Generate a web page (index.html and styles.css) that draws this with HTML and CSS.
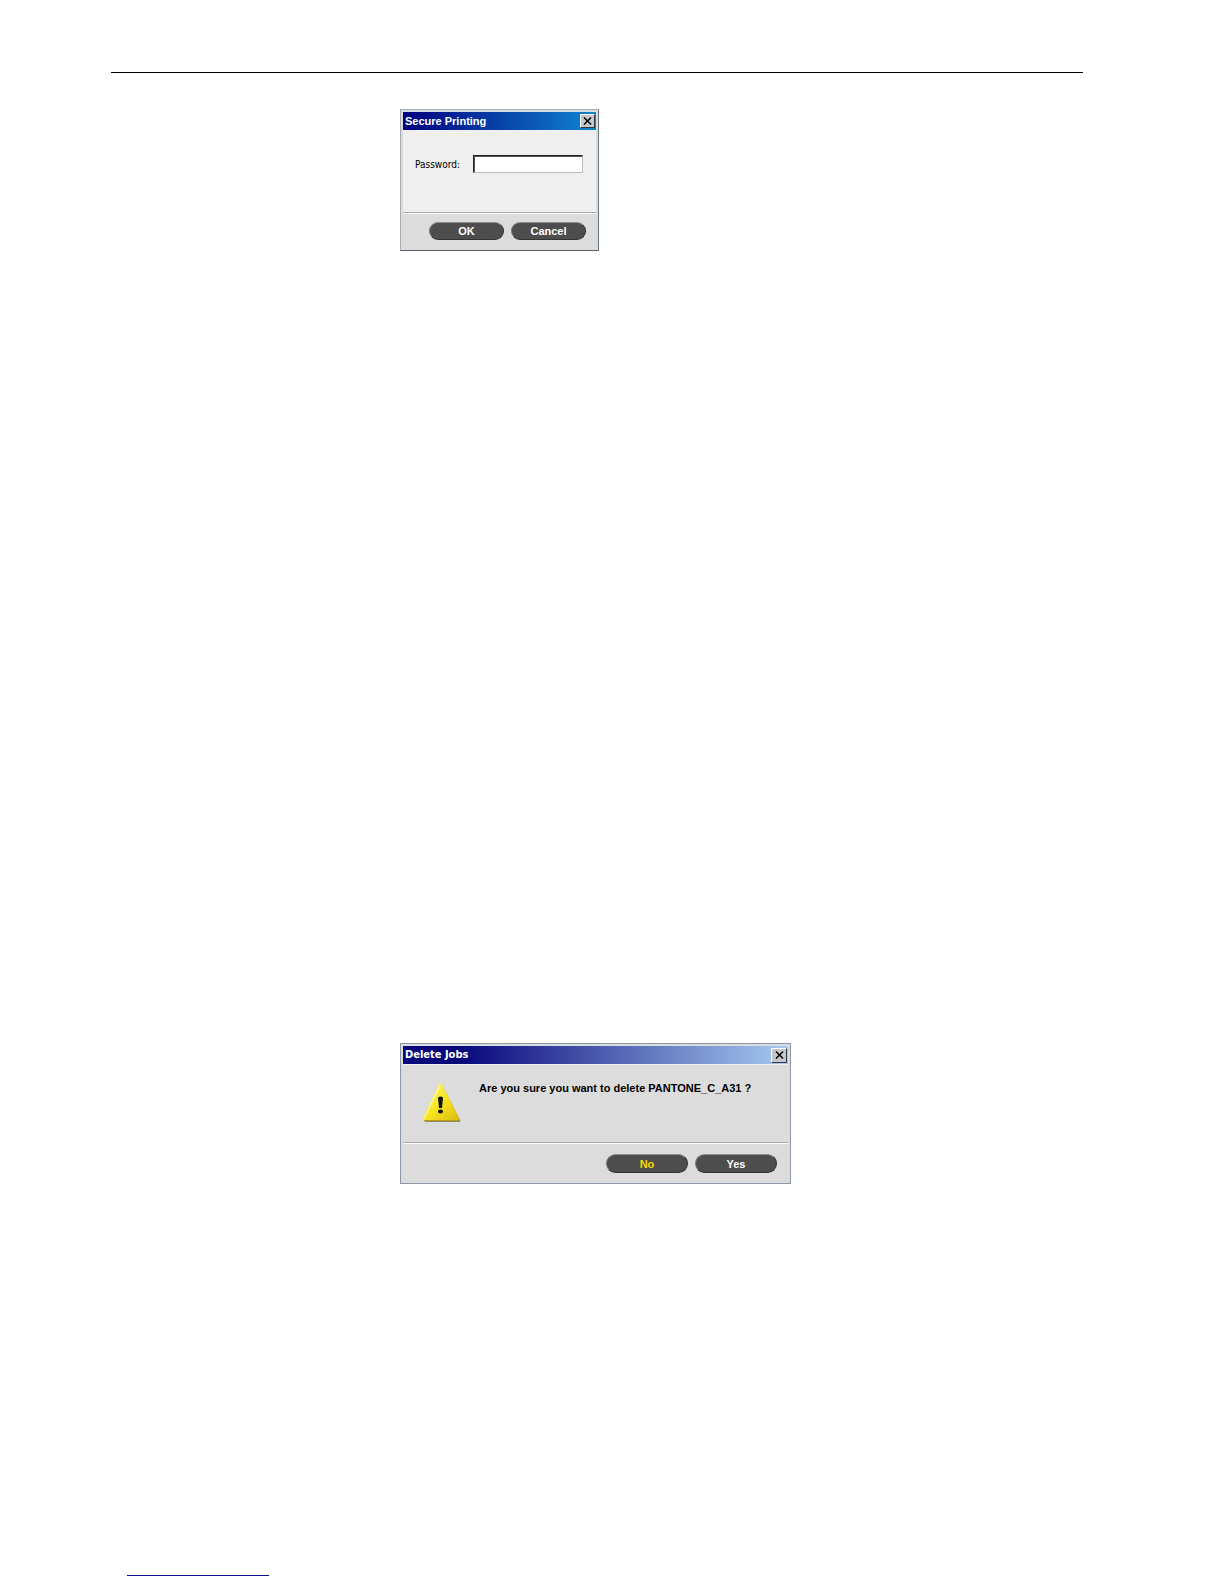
FILE: index.html
```html
<!DOCTYPE html>
<html lang="en">
<head>
  <meta charset="UTF-8">
  <title>Secure Printing</title>
  <link rel="stylesheet" href="styles.css">
</head>
<body>
  <main class="page">
    <hr class="page-rule">

    <form class="dialog dialog-secure">
      <div class="title-bar">
        <h2>Secure Printing</h2>
        <button type="button" class="close-btn" aria-label="Close">
          <svg viewBox="0 0 9 8" width="9" height="8"><path d="M1 0.500L8 7.500M8 0.500L1 7.500"/></svg>
        </button>
      </div>
      <div class="dialog-body">
        <label for="password">Password:</label>
        <input type="password" id="password">
      </div>
      <div class="dialog-footer">
        <button type="submit" class="pill-btn">OK</button>
        <button type="button" class="pill-btn">Cancel</button>
      </div>
    </form>

    <form class="dialog dialog-delete">
      <div class="title-bar">
        <h2>Delete Jobs</h2>
        <button type="button" class="close-btn" aria-label="Close">
          <svg viewBox="0 0 9 8" width="9" height="8"><path d="M1 0.500L8 7.500M8 0.500L1 7.500"/></svg>
        </button>
      </div>
      <div class="dialog-body">
        <svg class="warning-icon" viewBox="0 0 40 41" width="40" height="41">
          <defs>
            <linearGradient id="warnFill" x1="0" y1="0" x2="1" y2="1">
              <stop offset="0" stop-color="#fff58a"/>
              <stop offset="0.5" stop-color="#f8e620"/>
              <stop offset="1" stop-color="#d9b90c"/>
            </linearGradient>
          </defs>
          <path d="M20 3L38 38Q39 40 37 40H4Q2 40 3 38Z" fill="#8f8a68"/>
          <path d="M17 2.500Q18.500 0 20 2.500L37 36Q38 39 35 39H3Q0 39 1 36Z" fill="url(#warnFill)"/>
          <path d="M2 37L18 3" fill="none" stroke="#fffbc0"/>
          <path d="M2 38.500H36" fill="none" stroke="#b79b10"/>
          <path d="M16 16Q16 14.500 18.500 14.500T21 16L20 26H17Z" fill="#111"/>
          <ellipse cx="18.500" cy="29.500" rx="2.500" ry="2" fill="#111"/>
        </svg>
        <p>Are you sure you want to delete PANTONE_C_A31 ?</p>
      </div>
      <div class="dialog-footer">
        <button type="button" class="pill-btn default">No</button>
        <button type="submit" class="pill-btn">Yes</button>
      </div>
    </form>

    <hr class="link-rule">
  </main>
</body>
</html>
```

FILE: styles.css
```css
* {
  box-sizing: border-box;
}

body {
  margin: 0;
  background: #fff;
  color: #000;
  font-family: "Liberation Sans", Arial, sans-serif;
  font-size: 11px;
}

.page {
  padding: 72px 141px 8px 111px;
}

.page-rule {
  height: 1px;
  margin: 0;
  border: 0;
  background: #000;
}

.dialog {
  margin-left: 289px;
  padding: 2px;
  border: 1px solid #8d97a5;
  background: #dcdcdc;
  box-shadow: inset 1px 1px 0 #d3dde6;
}

.dialog-secure {
  width: 199px;
  margin-top: 36px;
  border-color: #a9adb3 #667480 #56606a #a9adb3;
}

.dialog-delete {
  width: 391px;
  margin-top: 792px;
}

.title-bar {
  display: flex;
  align-items: center;
  justify-content: space-between;
  height: 18px;
  padding: 0 1px 0 2px;
  background: linear-gradient(90deg, #000080, #1084d0);
  color: #fff;
}

.title-bar h2 {
  margin: 0;
  font-size: 11px;
  line-height: 16px;
}

.dialog-delete .title-bar {
  background: linear-gradient(90deg, #08087c 15%, #a6caf0);
}

.dialog-delete .title-bar h2 {
  font-family: "DejaVu Sans Condensed", "DejaVu Sans", sans-serif;
}

.close-btn {
  display: flex;
  align-items: center;
  justify-content: center;
  width: 15px;
  height: 14px;
  padding: 0;
  border: 1px solid;
  border-color: #fff #303840 #303840 #fff;
  background: #c4c8cc;
}

.close-btn path {
  fill: none;
  stroke: #000;
  stroke-width: 1.5;
}

.dialog-delete .close-btn {
  width: 16px;
  height: 15px;
}

.dialog-body {
  display: flex;
  border-bottom: 1px solid #a8a8a8;
}

.dialog-secure .dialog-body {
  align-items: flex-start;
  justify-content: space-between;
  height: 83px;
  padding: 25px 13px 0 12px;
  background: #efefef;
}

.dialog-body label {
  font-family: "DejaVu Sans Condensed", "DejaVu Sans", sans-serif;
  font-size: 10px;
  line-height: 20px;
}

.dialog-body input {
  width: 110px;
  height: 18px;
  padding: 0 2px;
  border: 1px solid;
  border-color: #222 #bbb #bbb #222;
  background: #fff;
  box-shadow: inset 1px 1px 0 #555;
}

.dialog-delete .dialog-body {
  gap: 17px;
  height: 79px;
  padding: 17px 20px 0 19px;
  border-top: 1px solid #efefef;
}

.warning-icon {
  flex: none;
}

.dialog-body p {
  margin: 0;
  font-weight: bold;
  line-height: 12px;
}

.dialog-footer {
  display: flex;
  justify-content: flex-end;
  gap: 7px;
  padding: 8px 10px;
  border-top: 1px solid #fff;
  background: #dcdcdc;
}

.pill-btn {
  width: 75px;
  height: 18px;
  padding: 0;
  border: 1px solid;
  border-color: #8a8a8a #333 #333 #777;
  border-radius: 10px;
  background: #4d4d4d;
  color: #fff;
  font-family: inherit;
  font-size: 11px;
  font-weight: bold;
}

.dialog-delete .pill-btn {
  width: 82px;
  height: 19px;
}

.dialog-delete .dialog-footer {
  padding: 10px 11px 8px;
}

.pill-btn.default {
  color: #ffd800;
}

.link-rule {
  width: 142px;
  height: 1px;
  margin: 391px 0 0 16px;
  border: 0;
  background: #10108c;
}
```
